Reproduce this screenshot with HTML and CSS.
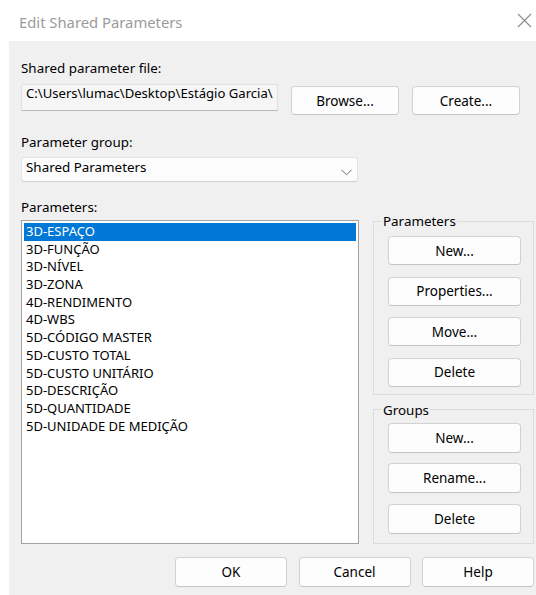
FILE: index.html
```html
<!DOCTYPE html>
<html lang="pt">
<head>
<meta charset="utf-8">
<title>Edit Shared Parameters</title>
<link rel="stylesheet" href="styles.css">
</head>
<body>
<div class="window">
  <header class="titlebar">
    <span class="title">Edit Shared Parameters</span>
    <svg class="close" width="15" height="15" viewBox="0 0 15 15" aria-hidden="true">
      <path d="M1 1 L14 14 M14 1 L1 14" stroke="#8a8a8a" stroke-width="1.1" fill="none"/>
    </svg>
  </header>

  <main class="panel">
    <div class="label">Shared parameter file:</div>
    <div class="file-row">
      <div class="path">C:\Users\lumac\Desktop\Estágio Garcia\</div>
      <button class="btn btn-file">Browse...</button>
      <button class="btn btn-file">Create...</button>
    </div>

    <div class="label label-group">Parameter group:</div>
    <div class="select">
      <span>Shared Parameters</span>
      <svg class="chevron" width="11" height="7" viewBox="0 0 11 7" aria-hidden="true">
        <path d="M0.5 0.8 L5.5 5.8 L10.5 0.8" stroke="#6b6b6b" stroke-width="1" fill="none"/>
      </svg>
    </div>

    <div class="main">
      <div class="list-col">
        <div class="label">Parameters:</div>
        <ul class="list">
          <li class="selected">3D-ESPAÇO</li>
          <li>3D-FUNÇÃO</li>
          <li>3D-NÍVEL</li>
          <li>3D-ZONA</li>
          <li>4D-RENDIMENTO</li>
          <li>4D-WBS</li>
          <li>5D-CÓDIGO MASTER</li>
          <li>5D-CUSTO TOTAL</li>
          <li>5D-CUSTO UNITÁRIO</li>
          <li>5D-DESCRIÇÃO</li>
          <li>5D-QUANTIDADE</li>
          <li>5D-UNIDADE DE MEDIÇÃO</li>
        </ul>
      </div>

      <div class="side">
        <fieldset class="group group-params">
          <legend>Parameters</legend>
          <button class="btn">New...</button>
          <button class="btn">Properties...</button>
          <button class="btn">Move...</button>
          <button class="btn">Delete</button>
        </fieldset>
        <fieldset class="group group-groups">
          <legend>Groups</legend>
          <button class="btn">New...</button>
          <button class="btn">Rename...</button>
          <button class="btn">Delete</button>
        </fieldset>
      </div>
    </div>

    <div class="footer">
      <button class="btn btn-foot">OK</button>
      <button class="btn btn-foot">Cancel</button>
      <button class="btn btn-foot">Help</button>
    </div>
  </main>
</div>
</body>
</html>
```
FILE: styles.css
```css
* { box-sizing: border-box; }

html, body {
  margin: 0;
  background: #ffffff;
}

body {
  font-family: "Noto Sans", "DejaVu Sans", sans-serif;
  font-size: 13.4px;
  color: #000;
  overflow: hidden;
}

.window {
  width: 536px;
  height: 595px;
}

/* Title bar */
.titlebar {
  height: 41px;
  display: flex;
  align-items: center;
  justify-content: space-between;
  padding: 2px 4px 0 19px;
}

.title {
  font-size: 14.8px;
  color: #9b9b9b;
}

.close {
  display: block;
  margin-top: -2px;
}

/* Dialog body */
.panel {
  margin-left: 9px;
  height: 554px;
  background: #f0f0f0;
  padding: 19px 2px 0 12px;
}

.label {
  height: 17px;
  line-height: 17px;
  white-space: nowrap;
}

.label-group {
  margin-top: 19px;
}

.file-row {
  display: flex;
  align-items: flex-start;
  gap: 13px;
  margin-top: 7px;
}

.path {
  width: 257px;
  height: 27px;
  background: #f6f6f6;
  border: 1px solid #e1e1e1;
  border-bottom-color: #b9b9b9;
  border-radius: 3px 3px 0 0;
  padding: 0 0 0 4px;
  font-size: 13.1px;
  line-height: 16px;
  white-space: nowrap;
}

.btn {
  display: block;
  height: 29px;
  padding: 0;
  border: 1px solid #d2d2d2;
  border-bottom-color: #c4c4c4;
  border-radius: 4px;
  background: #fdfdfd;
  font-family: inherit;
  font-size: 13.5px;
  color: #000;
  text-align: center;
}

.btn-file {
  width: 108px;
  margin-top: 2px;
}

/* Dropdown */
.select {
  width: 337px;
  height: 25px;
  margin-top: 6px;
  display: flex;
  align-items: flex-start;
  justify-content: space-between;
  padding: 2px 5px 0 4px;
  background: #fcfcfc;
  border: 1px solid #e3e3e3;
  border-bottom-color: #cfcfcf;
  border-radius: 3px;
  line-height: 14px;
}

.chevron {
  display: block;
  margin-top: 9px;
}

/* Parameters list + side buttons */
.main {
  display: flex;
  align-items: flex-start;
  margin-top: 17px;
}

.list-col {
  width: 338px;
}

.list {
  list-style: none;
  margin: 4px 0 0;
  height: 324px;
  padding: 2px;
  background: #fff;
  border: 1px solid #a2a2a2;
  font-size: 13px;
}

.list li {
  height: 17.7px;
  line-height: 17.7px;
  padding-left: 2px;
  white-space: nowrap;
}

.list li.selected {
  background: #0078d7;
  color: #fff;
}

.side {
  width: 161px;
  margin-left: 14px;
  margin-top: 12px;
}

.group {
  margin: 0;
  border: 1px solid #dcdcdc;
  padding: 0 12px 7px 14px;
  display: flex;
  flex-direction: column;
  gap: 11.5px;
}

.group legend {
  margin-left: -6px;
  padding: 0 1px;
  line-height: 20px;
}

.group-params {
  padding-top: 5px;
}

.group-groups {
  margin-top: 5px;
  padding-top: 3px;
  padding-bottom: 9px;
  gap: 10.5px;
}

.group-groups .btn {
  height: 30px;
}

/* Dialog buttons */
.footer {
  display: flex;
  justify-content: flex-end;
  gap: 11.5px;
  margin-top: 13px;
}

.btn-foot {
  width: 112px;
  height: 30px;
}
```
